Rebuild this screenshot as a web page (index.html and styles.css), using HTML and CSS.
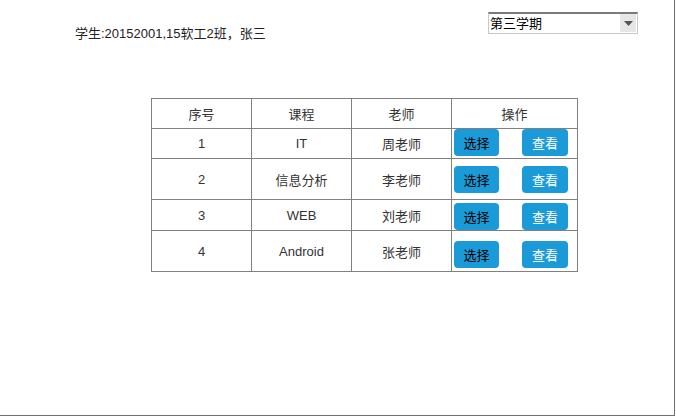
FILE: index.html
```html
<!DOCTYPE html>
<html lang="zh-CN">
<head>
<meta charset="utf-8">
<title>选课</title>
<link rel="stylesheet" href="styles.css">
</head>
<body>
<div class="page">
  <div class="header">
    <div class="student">学生:20152001,15软工2班，张三</div>
    <div class="select" role="combobox">
      <span class="select-text">第三学期</span>
      <span class="select-arrow"><svg width="9" height="5" viewBox="0 0 9 5"><path d="M0 0H9L4.5 5Z" fill="#555"/></svg></span>
    </div>
  </div>
  <table class="courses">
    <colgroup><col class="c1"><col class="c2"><col class="c3"><col class="c4"></colgroup>
    <tr class="row-a"><th>序号</th><th>课程</th><th>老师</th><th>操作</th></tr>
    <tr class="row-a"><td>1</td><td>IT</td><td>周老师</td><td class="ops ops-1"><div class="btns"><button class="btn sel">选择</button><button class="btn view">查看</button></div></td></tr>
    <tr class="row-b"><td>2</td><td>信息分析</td><td>李老师</td><td class="ops ops-2"><div class="btns"><button class="btn sel">选择</button><button class="btn view">查看</button></div></td></tr>
    <tr class="row-a"><td>3</td><td>WEB</td><td>刘老师</td><td class="ops ops-3"><div class="btns"><button class="btn sel">选择</button><button class="btn view">查看</button></div></td></tr>
    <tr class="row-b"><td>4</td><td>Android</td><td>张老师</td><td class="ops ops-4"><div class="btns"><button class="btn sel">选择</button><button class="btn view">查看</button></div></td></tr>
  </table>
</div>
</body>
</html>
```
FILE: styles.css
```css
html, body { margin: 0; padding: 0; background: #fff; }
body { font-family: "Liberation Sans", "Noto Sans CJK SC", sans-serif; font-size: 13px; color: #333; }
.page {
  width: 674px; height: 415px;
  border-right: 1px solid #707070; border-bottom: 1px solid #707070;
  overflow: hidden;
}
.header { display: flex; align-items: flex-start; padding-top: 12px; }
.student { margin-left: 75px; margin-top: 13px; line-height: 18px; color: #222; }
.select {
  margin-left: auto; margin-right: 36px;
  width: 150px; height: 22px; box-sizing: border-box;
  display: flex; align-items: stretch;
  border: 1px solid #c8c8c8; border-top: 2px solid #7a7a7a;
  background: #fff;
}
.select-text { flex: 1; line-height: 19px; padding-left: 1px; color: #000; }
.select-arrow { width: 16px; margin: 0 1px 1px 0; background: #e6e6e6; display: flex; align-items: center; justify-content: center; }
.courses {
  margin-top: 55px; margin-left: 151px;
  border-collapse: collapse; table-layout: fixed; width: 427px;
}
.c1, .c2, .c3 { width: 100px; }
.c4 { width: 126px; }
.courses th, .courses td {
  border: 1px solid #808080; padding: 0; text-align: center;
  font-weight: normal; color: #333; vertical-align: middle;
}
.row-a { height: 30px; }
.row-b { height: 41px; }
.courses td.ops { vertical-align: top; }
.btns { display: flex; padding-left: 2px; gap: 23px; }
.ops-1 .btns { padding-top: 0; }
.ops-2 .btns { padding-top: 7px; }
.ops-3 .btns { padding-top: 3px; }
.ops-4 .btns { padding-top: 10px; }
.btn {
  font-family: inherit; font-size: 13px; border: none; border-radius: 4px;
  background: #1a9ad6; height: 27px; padding: 0; margin: 0; cursor: pointer;
}
.sel { width: 45px; color: #000; }
.view { width: 46px; color: #fff; }
```
